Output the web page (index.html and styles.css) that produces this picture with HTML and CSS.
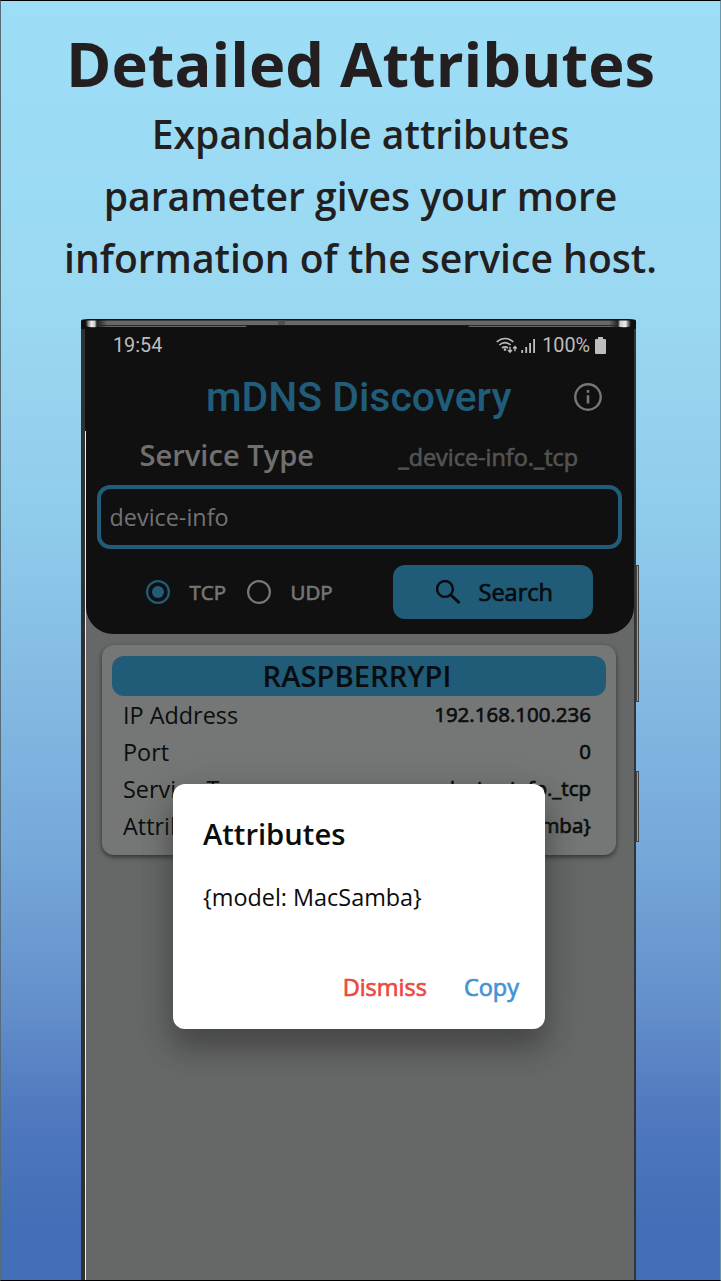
FILE: index.html
```html
<!DOCTYPE html>
<html lang="en">
<head>
<meta charset="utf-8">
<title>mDNS Discovery</title>
<link rel="stylesheet" href="styles.css">
</head>
<body>
<main class="poster">
  <header class="intro">
    <h1 class="headline">Detailed Attributes</h1>
    <p class="tagline"><span class="line line-1">Expandable attributes</span><br><span class="line line-2">parameter gives your more</span><br><span class="line line-3">information of the service host.</span></p>
  </header>
  <section class="phone">
    <svg class="bezel" width="555" height="10" viewBox="0 0 555 10">
      <defs>
        <linearGradient id="rim" x1="0" x2="1">
          <stop offset="0" stop-color="#222"/><stop offset=".005" stop-color="#999"/><stop offset=".01" stop-color="#eee"/><stop offset=".016" stop-color="#ccc"/><stop offset=".02" stop-color="#222"/><stop offset=".04" stop-color="#686868"/>
          <stop offset=".96" stop-color="#686868"/><stop offset=".976" stop-color="#222"/><stop offset=".98" stop-color="#ccc"/><stop offset=".99" stop-color="#eee"/><stop offset=".995" stop-color="#777"/><stop offset="1" stop-color="#111"/>
        </linearGradient>
      </defs>
      <path d="M0 10V2Q0 .8 2 .5L7 0H548L553 .5Q555 .8 555 2V10Z" fill="#101010"/>
      <path d="M5 1.500H550V7Q546 9 540 8H16Q9 9 5 7Z" fill="url(#rim)"/>
      <path d="M18 6.500H537" stroke="#2b2b2b" stroke-width="1"/>
      <path d="M164 6.500H389L387 8H166Z" fill="#0d0d0d"/>
      <path d="M197 1.500H204V6H197Z" fill="#505050"/>
    </svg>
    <div class="screen">
      <div class="top">
        <div class="status">
          <span class="clock">19:54</span>
          <svg class="wifi" width="21" height="18" viewBox="0 0 21 18" fill="none" stroke="#bdbdbd" stroke-width="1.600">
            <path d="M.7 4.800Q9 -1.800 17.300 4.800M3.300 8Q9 3.400 14.700 8M6 11Q9 8.700 12 11"/>
            <circle cx="9" cy="12.600" r="1.300" fill="#bdbdbd" stroke="none"/>
            <path d="M14 9.800V15M12 13L14 15.200L16 13M19 14.300V9.500M17.200 11.500L19 9.500L20.800 11.500" stroke-width="1.400"/>
          </svg>
          <svg class="signal" width="15" height="16" viewBox="0 0 15 16" fill="#bdbdbd"><path d="M.3 12h1.800v3H.3zM4.300 9h1.800v6H4.300zM8.200 5H10v10H8.200zM12.200 1H14v14h-1.800z"/></svg>
          <span class="charge">100%</span>
          <svg class="battery" width="11" height="17" viewBox="0 0 11 17" fill="#bdbdbd"><path d="M3 0H8V2H10Q11 2 11 3V16Q11 17 10 17H1Q0 17 0 16V3Q0 2 1 2H3Z"/></svg>
        </div>
        <div class="appbar">
          <h2 class="app-title">mDNS Discovery</h2>
          <svg class="info" width="28" height="28" viewBox="0 0 28 28"><circle cx="14" cy="14" r="12.700" fill="none" stroke="#777" stroke-width="2.400"/><path d="M12.700 7h2.600v2.700h-2.600zM12.700 12.200h2.600v8.300h-2.600z" fill="#777"/></svg>
        </div>
        <div class="type-row"><span class="type-label">Service Type</span><span class="type-value faux">_device-info._tcp</span></div>
        <div class="field"><span class="field-text">device-info</span></div>
        <div class="controls">
          <svg class="radio" width="24" height="24" viewBox="0 0 24 24"><circle cx="12" cy="12" r="10.900" fill="none" stroke="#205d7b" stroke-width="2.200"/><circle cx="12" cy="12" r="6" fill="#205d7b"/></svg>
          <span class="radio-label tcp faux">TCP</span>
          <svg class="radio" width="24" height="24" viewBox="0 0 24 24"><circle cx="12" cy="12" r="10.900" fill="none" stroke="#777" stroke-width="2.200"/></svg>
          <span class="radio-label udp faux">UDP</span>
          <div class="search">
            <svg width="25" height="24" viewBox="0 0 25 24" fill="none" stroke="#080c0e"><circle cx="9" cy="9" r="7.900" stroke-width="2.400"/><path d="M15 15L23.500 23" stroke-width="3"/></svg>
            <span class="search-text faux">Search</span>
          </div>
        </div>
      </div>
      <article class="card">
        <h3 class="host"><span>RASPBERRYPI</span></h3>
        <div class="row"><span>IP Address</span><b class="faux">192.168.100.236</b></div>
        <div class="row"><span>Port</span><b class="faux">0</b></div>
        <div class="row"><span>Service Type</span><b class="faux">_device-info._tcp</b></div>
        <div class="row"><span>Attributes</span><b class="faux">{model: MacSamba}</b></div>
      </article>
    </div>
    <i class="key key-volume"></i>
    <i class="key key-power"></i>
    <div class="dialog">
      <h4 class="dialog-title">Attributes</h4>
      <p class="dialog-body">{model: MacSamba}</p>
      <div class="actions"><span class="dismiss faux">Dismiss</span><span class="copy faux">Copy</span></div>
    </div>
  </section>
</main>
</body>
</html>
```
FILE: styles.css
```css
* { box-sizing: border-box; margin: 0; padding: 0; }
body { width: 721px; height: 1281px; overflow: hidden; font-family: "Open Sans", sans-serif; }
svg { display: block; flex: none; }
span, b { white-space: nowrap; }
/* regular weight thickened with a hairline stroke */
.faux { font-weight: 400; -webkit-text-stroke: .7px currentColor; }

.poster {
  height: 1281px;
  overflow: hidden;
  display: flex;
  flex-direction: column;
  border: 1px solid #000;
  border-left-color: #566d78;
  border-right-color: #6c98ac;
  background: linear-gradient(#9dddf6 0, #9bd9f3 290px, #96d0ee 430px, #90cdec 500px, #88bfe5 640px, #76a8da 850px, #6490cb 1000px, #5079be 1110px, #426fb7 1220px);
}
.intro { flex: none; height: 318px; padding-top: 21px; text-align: center; color: #231f20; }
.headline { font-size: 61.4px; line-height: 82px; font-weight: 700; }
.tagline { font-size: 39.1px; line-height: 62px; font-weight: 600; margin-top: -1px; }

.phone { flex: none; position: relative; width: 555px; height: 962px; margin-left: 80px; }
.bezel { height: 10px; }
.screen {
  height: 952px;
  padding-left: 1px;
  border-left: 4px solid #303131;
  border-right: 2px solid #333435;
  background: linear-gradient(#101010 102px, #eee 102px) left / 1px 100% no-repeat, #666867;
}
.top { height: 305px; background: #101010; border-radius: 0 0 27px 27px; }

.status { height: 33px; padding: 0 28px 0 27px; display: flex; align-items: center; color: #bdbdbd; font: 19.8px/33px Roboto, sans-serif; }
.clock { margin-right: auto; }
.signal { margin-left: 4px; }
.charge { margin-left: 6px; }
.battery { margin-left: 5px; }

.appbar { height: 66px; padding: 3px 32.500px 0 120px; display: flex; justify-content: space-between; align-items: center; }
.app-title { font: 500 40.9px/50px Roboto, sans-serif; color: #205d7b; white-space: nowrap; }

.type-row { height: 57px; padding: 0 56px 3px 53.500px; display: flex; justify-content: space-between; align-items: center; }
.type-label { font-size: 29.1px; font-weight: 600; color: #707070; }
.type-value { font-size: 23.4px; color: #535353; margin-top: 3px; }

.field { height: 64px; margin: 0 12px 0 11px; border: 4px solid #205d7b; border-radius: 13px; padding-left: 8.500px; display: flex; align-items: center; }
.field-text { font-size: 23.4px; color: #737373; }

.controls { height: 85px; padding: 1px 41.500px 0 59.500px; display: flex; align-items: center; }
.radio-label { font-size: 20.5px; color: #757575; }
.tcp { margin: 0 20px; width: 37px; }
.udp { margin-left: 20px; }
.search { width: 200px; height: 54px; margin-left: auto; padding-left: 43px; border-radius: 12px; background: #205b78; display: flex; align-items: center; gap: 18px; }
.search-text { font-size: 23.5px; color: #070b0d; }

.card { height: 210px; margin: 11px 18px 0 16px; padding: 11px 10px; border-radius: 12px; background: #757776; box-shadow: 0 2px 5px #303130; color: #0c0d0d; }
.host { height: 40px; border-radius: 12px; background: #205b78; font-size: 29.2px; line-height: 40px; font-weight: 600; text-align: center; color: #080d10; padding-right: 4px; }
.row { height: 37.200px; padding: 0 15px 0 11px; display: flex; justify-content: space-between; align-items: center; font-size: 23.4px; }
.row b { font-size: 20.5px; margin-top: -2px; }

.key { position: absolute; left: 555px; width: 3px; border: 1px solid #444; background: #9a9a9a; }
.key-volume { top: 246px; height: 137px; }
.key-power { top: 452px; height: 71px; }

.dialog { position: absolute; left: 92px; top: 465px; width: 372px; height: 245px; padding: 28px 26px 0 30px; border-radius: 12px; background: #fff; color: #0b0c0c; box-shadow: 0 20px 28px rgba(40, 42, 41, .4), 0 8px 36px rgba(40, 42, 41, .25); }
.dialog-title { font-size: 29.2px; line-height: 45px; font-weight: 600; }
.dialog-body { margin-top: 22px; font-size: 23.4px; line-height: 36px; }
.actions { margin-top: 54px; display: flex; justify-content: flex-end; gap: 37px; font-size: 23.5px; line-height: 36px; }
.dismiss { color: #ed493f; }
.copy { color: #4393d3; }
```
